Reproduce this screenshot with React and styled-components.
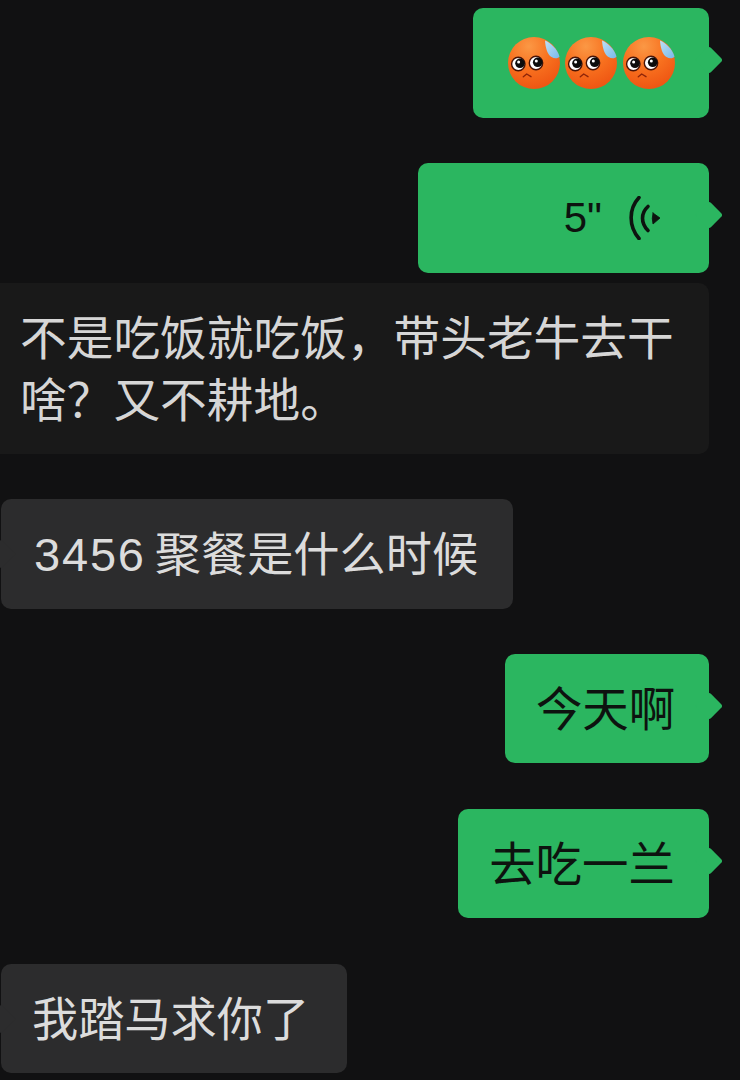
import React from "react";
import styled, { createGlobalStyle } from "styled-components";

const Global = createGlobalStyle`
  html, body { margin: 0; padding: 0; background: #111112; }
  body { width: 740px; height: 1080px; overflow: hidden; }
`;

const Page = styled.main`
  width: 740px;
  height: 1080px;
  box-sizing: border-box;
  padding-top: 8px;
  display: flex;
  flex-direction: column;
  background: #111112;
  font-family: "Noto Sans CJK SC", "Liberation Sans", sans-serif;
`;

const Bubble = styled.div`
  position: relative;
  box-sizing: border-box;
  width: ${(p) => p.$w}px;
  height: ${(p) => p.$h || 110}px;
  margin-top: ${(p) => p.$top}px;
  margin-left: ${(p) => p.$left}px;
  border-radius: 10px;
  display: flex;
  align-items: center;
`;

const Sent = styled(Bubble)`
  background: #2bb660;
  color: #0d130f;
  font-size: 46.4px;
  justify-content: center;
  padding: 0 3px 7px 0;
  &::after {
    content: "";
    position: absolute;
    right: -10px;
    top: 42px;
    width: 20px;
    height: 20px;
    background: #2bb660;
    border-radius: 3px;
    transform: rotate(45deg);
  }
`;

const Received = styled(Bubble)`
  background: #2c2c2d;
  color: #dcdcdc;
  font-size: 46.2px;
  padding: 0 0 7px ${(p) => p.$pad}px;
  white-space: nowrap;
  &::before {
    content: "";
    position: absolute;
    left: -10px;
    top: 45px;
    width: 20px;
    height: 20px;
    background: #2c2c2d;
    transform: rotate(45deg);
  }
`;

const Quoted = styled(Bubble)`
  display: block;
  background: #191919;
  color: #d6d6d6;
  font-size: 46.7px;
  line-height: 61.5px;
  padding: 21px 0 0 20px;
  border-radius: 0 10px 10px 0;
`;

const Digits = styled.span`
  position: relative;
  z-index: 1;
  font-family: "Liberation Sans", sans-serif;
  font-size: 47px;
  letter-spacing: 1.8px;
  margin-right: 9px;
`;

const Label = styled.span`
  position: relative;
  z-index: 1;
`;

const EmojiRow = styled.div`
  display: flex;
  gap: 5.5px;
  margin: 6px 0 0 3px;
`;

const VoiceRow = styled.div`
  display: flex;
  align-items: center;
  justify-content: flex-end;
  width: 100%;
  padding-right: 45px;
  gap: 27px;
  margin-top: 7px;
  font-family: "Liberation Sans", sans-serif;
  font-size: 42px;
`;

const Emoji = () => (
  <svg width="52" height="52" viewBox="0 0 52 52">
    <defs>
      <radialGradient id="face" cx="40%" cy="18%" r="85%">
        <stop offset="0" stopColor="#fb9845" />
        <stop offset="0.5" stopColor="#f8711f" />
        <stop offset="1" stopColor="#ee5412" />
      </radialGradient>
      <linearGradient id="drop" x1="0" y1="0" x2="1" y2="1">
        <stop offset="0" stopColor="#bfe0f4" />
        <stop offset="1" stopColor="#78b9ea" />
      </linearGradient>
    </defs>
    <circle cx="26" cy="26" r="26" fill="url(#face)" />
    <path d="M37 3.500C43 6 49.500 12 51.500 19.500C50.500 21.500 46.500 22 43.500 20C39.500 17.500 37.500 11 37 3.500Z" fill="url(#drop)" />
    <circle cx="10.300" cy="27" r="6.700" fill="#fff" stroke="#4a1406" strokeWidth="1.400" />
    <circle cx="12" cy="26.300" r="4.800" fill="#0c0c0c" />
    <circle cx="10.600" cy="25" r="1.500" fill="#fff" />
    <circle cx="28" cy="26" r="6.700" fill="#fff" stroke="#4a1406" strokeWidth="1.400" />
    <circle cx="29.700" cy="25.300" r="4.800" fill="#0c0c0c" />
    <circle cx="28.300" cy="24" r="1.500" fill="#fff" />
    <path d="M15.300 39.700L18.700 37L23 39.700" fill="none" stroke="#8e2509" strokeWidth="1.400" strokeLinecap="round" strokeLinejoin="round" />
  </svg>
);

const VoiceIcon = () => (
  <svg width="32" height="44" viewBox="0 0 32 44" fill="none" stroke="#0d130f" strokeLinecap="round">
    <path d="M10 1.500C-0.500 13 -0.500 30 10 42.500" strokeWidth="3.600" />
    <path d="M19 10.500C11.700 17 11.700 27 19 34.500" strokeWidth="3.600" />
    <path d="M24 17L31 22L24 28Q22.500 22.500 24 17Z" fill="#0d130f" stroke="#0d130f" strokeWidth="0.800" strokeLinejoin="round" />
  </svg>
);

export default function App() {
  return (
    <Page>
      <Global />
      <Sent $w={236} $top={0} $left={473}>
        <EmojiRow>
          <Emoji />
          <Emoji />
          <Emoji />
        </EmojiRow>
      </Sent>
      <Sent $w={291} $top={45} $left={418}>
        <VoiceRow>
          <span>5"</span>
          <VoiceIcon />
        </VoiceRow>
      </Sent>
      <Quoted $w={709} $h={171} $top={10} $left={0}>
        不是吃饭就吃饭，带头老牛去干
        <br />
        啥？又不耕地。
      </Quoted>
      <Received $w={512} $top={45} $left={1} $pad={33}>
        <Label>
          <Digits>3456</Digits>聚餐是什么时候
        </Label>
      </Received>
      <Sent $w={204} $h={109} $top={45} $left={505}>今天啊</Sent>
      <Sent $w={251} $h={109} $top={46} $left={458}>去吃一兰</Sent>
      <Received $w={346} $h={109} $top={46} $left={1} $pad={31}>
        <Label>我踏马求你了</Label>
      </Received>
    </Page>
  );
}
